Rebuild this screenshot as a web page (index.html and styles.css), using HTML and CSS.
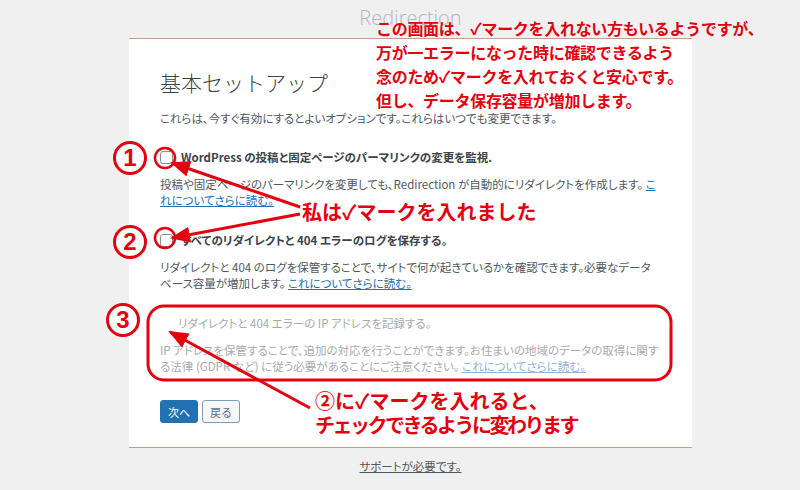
FILE: index.html
```html
<!DOCTYPE html>
<html lang="ja">
<head>
  <meta charset="UTF-8">
  <title>Redirection - 基本セットアップ</title>
  <link rel="stylesheet" href="styles.css">
</head>
<body>

  <div class="page">
    <div class="brand">Redirection</div>

    <!-- セットアップカード -->
    <div class="wizard">
      <h1>基本セットアップ</h1>
      <p class="intro">これらは、今すぐ有効にするとよいオプションです。これらはいつでも変更できます。</p>

      <div class="option">
        <label class="opt-title"><span class="check"></span>WordPress の投稿と固定ページのパーマリンクの変更を監視.</label>
        <p class="opt-desc">投稿や固定ページのパーマリンクを変更しても、Redirection が自動的にリダイレクトを作成します。 <a href="#">これについてさらに読む。</a></p>
      </div>

      <div class="option">
        <label class="opt-title"><span class="check"></span>すべてのリダイレクトと 404 エラーのログを保存する。</label>
        <p class="opt-desc">リダイレクトと 404 のログを保管することで、サイトで何が起きているかを確認できます。必要なデータベース容量が増加します。 <a href="#">これについてさらに読む。</a></p>
      </div>

      <div class="option disabled">
        <label class="opt-title sub">リダイレクトと 404 エラーの IP アドレスを記録する。</label>
        <p class="opt-desc">IP アドレスを保管することで、追加の対応を行うことができます。お住まいの地域のデータの取得に関する法律 (GDPR など) に従う必要があることにご注意ください。 <a href="#">これについてさらに読む。</a></p>
      </div>

      <div class="actions">
        <button class="btn primary">次へ</button>
        <button class="btn secondary">戻る</button>
      </div>
    </div>

    <p class="help"><a href="#">サポートが必要です。</a></p>
  </div>

  <!-- 注釈 -->
  <div class="notes">
    <svg class="marks" width="800" height="490" viewBox="0 0 800 490">
      <defs>
        <marker id="head" markerWidth="20" markerHeight="16" refX="18" refY="8" orient="auto" markerUnits="userSpaceOnUse">
          <path d="M0 0 L20 8 L0 16 Z" fill="#e3000f"/>
        </marker>
      </defs>
      <circle cx="165" cy="158" r="10" fill="none" stroke="#e3000f" stroke-width="2.5"/>
      <circle cx="165" cy="238" r="10" fill="none" stroke="#e3000f" stroke-width="2.5"/>
      <rect x="148" y="306" width="523" height="74" rx="16" fill="none" stroke="#e3000f" stroke-width="3"/>
      <line x1="300" y1="207" x2="172" y2="163" stroke="#e3000f" stroke-width="3" marker-end="url(#head)"/>
      <line x1="300" y1="214" x2="172" y2="238" stroke="#e3000f" stroke-width="3" marker-end="url(#head)"/>
      <line x1="310" y1="408" x2="170" y2="332" stroke="#e3000f" stroke-width="3" marker-end="url(#head)"/>
    </svg>

    <span class="num n1">1</span>
    <span class="num n2">2</span>
    <span class="num n3">3</span>

    <p class="memo top">この画面は、✓マークを入れない方もいるようですが、<br>万が一エラーになった時に確認できるよう<br>念のため✓マークを入れておくと安心です。<br>但し、データ保存容量が増加します。</p>
    <p class="memo mine">私は✓マークを入れました</p>
    <p class="memo bottom">②に✓マークを入れると、<br><span class="tight">チェックできるように変わります</span></p>
  </div>

</body>
</html>
```

FILE: styles.css
```css
body {
  margin: 0;
  background: #f0f0f1;
  font-family: "Noto Sans CJK JP", "Noto Sans", sans-serif;
  color: #50575e;
  width: 800px;
  height: 490px;
  position: relative;
  overflow: hidden;
}

.page {
  width: 563px;
  margin-left: 129px;
}

.brand {
  height: 38px;
  box-sizing: border-box;
  padding-top: 5px;
  line-height: 26px;
  text-align: center;
  font-family: "Open Sans", "Noto Sans", sans-serif;
  font-size: 20px;
  font-weight: 300;
  color: #b4b7ba;
}

.wizard {
  background: white;
  border-top: 1px solid #c49f8a;
  border-bottom: 1px solid #c49f8a;
  padding: 0 31px 24px;
}

h1 {
  margin: 28px 0 13px;
  font-size: 21px;
  line-height: 30px;
  font-weight: 300;
  color: #3c434a;
}

.intro {
  margin: 0 0 23px;
  font-size: 11.5px;
  line-height: 16px;
  font-feature-settings: "palt";
}

.option {
  margin-bottom: 24px;
}

.opt-title {
  display: flex;
  align-items: center;
  gap: 8px;
  font-size: 11.5px;
  line-height: 16px;
  font-weight: bold;
  color: #3c434a;
  font-feature-settings: "palt";
}

.opt-title.sub {
  padding-left: 18px;
}

.check {
  width: 11px;
  height: 11px;
  border: 1px solid #8c8f94;
  border-radius: 3px;
  background: white;
}

.opt-desc {
  margin: 11px 0 0;
  font-size: 11.5px;
  line-height: 16px;
  font-feature-settings: "palt";
}

a {
  color: #2271b1;
}

.disabled .opt-title,
.disabled .opt-desc {
  color: #a7aaad;
  font-weight: normal;
}

.disabled a {
  color: #8fb4d2;
}

.actions {
  display: flex;
  gap: 4px;
  margin-top: 26px;
}

.btn {
  height: 23px;
  padding: 0 7px;
  border-radius: 3px;
  font-family: inherit;
  font-size: 11px;
  white-space: nowrap;
}

.primary {
  background: #2271b1;
  border: 1px solid #2271b1;
  color: white;
}

.secondary {
  background: #f6f7f7;
  border: 1px solid #7d9db5;
  color: #4f7390;
}

.help {
  margin: 10px 0 0;
  text-align: center;
  font-size: 11.5px;
  line-height: 16px;
  font-feature-settings: "palt";
}

.help a {
  color: #50575e;
}

/* annotations over the screenshot */
.notes {
  position: absolute;
  left: 0;
  top: 0;
  width: 800px;
  height: 490px;
  pointer-events: none;
}

.marks {
  position: absolute;
  left: 0;
  top: 0;
}

.num {
  position: absolute;
  width: 28px;
  height: 28px;
  border: 3px solid #e3000f;
  border-radius: 50%;
  background: white;
  color: #e3000f;
  font-family: "Liberation Sans", sans-serif;
  font-weight: bold;
  font-size: 24px;
  line-height: 28px;
  text-align: center;
}

.n1 { left: 113px; top: 141px; }
.n2 { left: 113px; top: 225px; }
.n3 { left: 106px; top: 303px; }

.memo {
  position: absolute;
  margin: 0;
  color: #e3000f;
  font-weight: bold;
  white-space: nowrap;
}

.memo.top {
  left: 376px;
  top: 16px;
  font-size: 16px;
  line-height: 24px;
  letter-spacing: -0.3px;
}

.memo.mine {
  left: 302px;
  top: 199px;
  font-size: 20px;
  line-height: 26px;
}

.memo.bottom {
  left: 315px;
  top: 389px;
  font-size: 20px;
  line-height: 24px;
}

.tight {
  letter-spacing: -2.5px;
}
```
